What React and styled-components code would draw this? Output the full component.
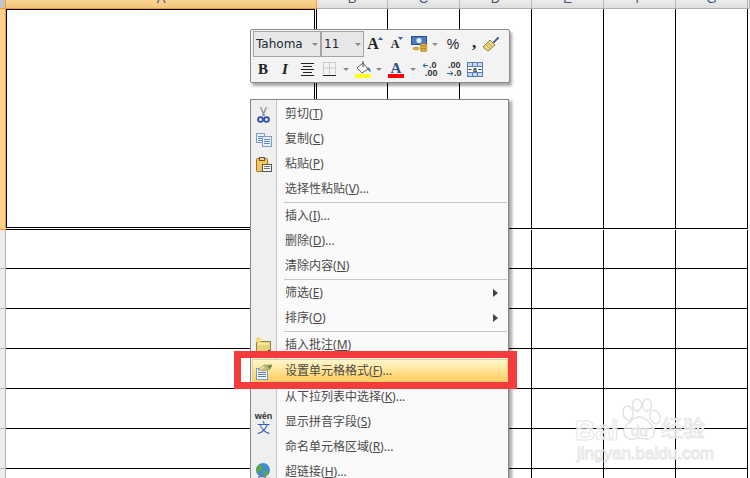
import React from 'react'
import styled, { createGlobalStyle } from 'styled-components'

const GlobalStyle = createGlobalStyle`
  html, body {
    margin: 0;
    padding: 0;
    background: #fff;
    overflow: hidden;
  }
  * { box-sizing: border-box; }
`

const Page = styled.div`
  position: relative;
  width: 750px;
  height: 478px;
  overflow: hidden;
  background: #fff;
  font-family: "Noto Sans", "Noto Sans CJK SC", sans-serif;
`

/* ---------- sheet ---------- */

const HeaderRow = styled.div`
  display: flex;
  height: 9px;
`

const Corner = styled.div`
  width: 6px;
  background: #c4c4c4;
  border-right: 1px solid #f29536;
  border-bottom: 1px solid #f29536;
`

const ColHead = styled.div`
  width: ${p => p.$w}px;
  flex: none;
  display: flex;
  align-items: flex-end;
  justify-content: center;
  overflow: hidden;
  padding-bottom: 3px;
  font-family: "Liberation Sans", sans-serif;
  font-size: 13px;
  line-height: 13px;
  color: #3f5675;
  background: ${p => p.$on ? 'linear-gradient(#f8d593, #f4c578)' : 'linear-gradient(#ececec, #dedede)'};
  border-right: 1px solid ${p => p.$on ? '#f2a33f' : '#b6b6b6'};
  border-bottom: 1px solid ${p => p.$on ? '#f29536' : '#b0b0b0'};
`

const Row = styled.div`
  display: flex;
  height: ${p => p.$h}px;
`

const RowHead = styled.div`
  width: 6px;
  flex: none;
  background: ${p => p.$on ? '#fdd28b' : '#ececec'};
  border-right: 1px solid ${p => p.$on ? '#f29536' : '#b4b4b4'};
  border-bottom: 1px solid ${p => p.$on ? '#f29536' : '#b4b4b4'};
`

const Cell = styled.div`
  width: ${p => p.$w}px;
  flex: none;
  background: #fff;
  border-right: 1px solid ${p => p.$faint ? '#d4dbe8' : '#000'};
  border-bottom: 1px solid ${p => p.$faint ? 'transparent' : '#000'};
  margin-bottom: ${p => p.$short ? '1px' : 0};
`

const SelectedCell = styled(Cell)`
  padding: 0 0 1px 0;
`

const Selection = styled.div`
  height: 100%;
  border: 1px solid #000;
  margin-right: 1px;
`

/* ---------- mini toolbar ---------- */

const MiniBar = styled.div`
  position: absolute;
  left: 250px;
  top: 29px;
  width: 260px;
  height: 54px;
  padding: 1px 0 0 1px;
  background: #f3f3f3;
  border: 1px solid #8b8b8b;
  border-radius: 2px;
  box-shadow: 2px 3px 3px rgba(0, 0, 0, 0.35);
`

const BarRow = styled.div`
  display: flex;
  align-items: center;
  height: ${p => p.$h}px;
`

const Combo = styled.div`
  width: ${p => p.$w}px;
  height: 26px;
  display: flex;
  align-items: center;
  justify-content: space-between;
  padding: 0 5px 0 2px;
  margin-left: ${p => p.$gap || 0}px;
  background: #e7e7e7;
  border: 1px solid #a4a4a4;
  font-family: "DejaVu Sans", sans-serif;
  font-size: 12px;
  color: #222a35;
`

const Caret = styled.span`
  width: ${p => p.$w || 0}px;
  display: flex;
  justify-content: center;
  flex: none;
  &::after {
    content: "";
    border-left: 3px solid transparent;
    border-right: 3px solid transparent;
    border-top: 3px solid #8a8a8a;
  }
`

const Tool = styled.div`
  width: ${p => p.$w}px;
  height: 22px;
  flex: none;
  display: flex;
  align-items: center;
  justify-content: center;
  color: #222;
  font-family: "Liberation Serif", serif;
  font-size: ${p => p.$size || 13}px;
  font-weight: ${p => p.$bold ? 700 : 400};
  font-style: ${p => p.$italic ? 'italic' : 'normal'};
`

const SansGlyph = styled.span`
  font-family: "Liberation Sans", sans-serif;
`

const CommaGlyph = styled.span`
  margin-top: -3px;
`

const Raised = styled.span`
  display: flex;
  align-self: flex-start;
  margin-top: 4px;
  margin-left: -1px;
`

const DecimalText = styled.text`
  font-family: "Liberation Sans", sans-serif;
  font-weight: 700;
  font-size: ${p => p.$size || 9}px;
  fill: #333;
`

/* ---------- context menu ---------- */

const Menu = styled.div`
  position: absolute;
  left: 250px;
  top: 99px;
  width: 259px;
  height: 400px;
  padding-top: 2px;
  border: 1px solid #868686;
  background: linear-gradient(90deg, #efefef 25px, #c6c6c6 25px, #c6c6c6 26px, #fafafa 26px);
  box-shadow: 3px 2px 3px rgba(0, 0, 0, 0.35);
  color: #4a4a4a;
  font-size: 12px;
`

const Item = styled.div`
  position: relative;
  height: 25px;
  margin: ${p => p.$active ? '1px 0 1px 1px' : 0};
  display: flex;
  align-items: center;
  line-height: 23px;
  ${p => p.$active && `
    background: linear-gradient(#fff7cf 0%, #ffe9a6 35%, #ffd673 70%, #ffcf5f 100%);
    outline: 1px solid #e6d28e;
    outline-offset: -1px;
  `}
`

const IconSlot = styled.div`
  width: ${p => p.$active ? 24 : 25}px;
  height: 25px;
  flex: none;
  display: flex;
  align-items: center;
  justify-content: center;
`

const Label = styled.span`
  padding-left: 9px;
  padding-bottom: 2px;
  white-space: nowrap;
`

const SubArrow = styled.span`
  position: absolute;
  right: 10px;
  top: 8px;
  border-top: 4px solid transparent;
  border-bottom: 4px solid transparent;
  border-left: 5px solid #444;
`

const Separator = styled.div`
  height: 2px;
  margin-left: 33px;
  margin-right: 1px;
  border-top: 1px solid #c6c6c6;
`

const WenIcon = styled.div`
  display: flex;
  flex-direction: column;
  align-items: center;
`

const WenTop = styled.span`
  font-family: "Liberation Sans", sans-serif;
  font-size: 9px;
  font-weight: 700;
  line-height: 8px;
  color: #333;
`

const WenBottom = styled.span`
  font-family: "Noto Sans CJK SC", sans-serif;
  font-size: 13px;
  line-height: 13px;
  color: #3a5fb0;
`

/* ---------- overlays ---------- */

const RedBox = styled.div`
  position: absolute;
  left: 234px;
  top: 351px;
  width: 283px;
  height: 38px;
  border: solid #f53b3b;
  border-width: 7px 9px 7px 7px;
`

const Watermark = styled.div`
  position: absolute;
  left: 574px;
  top: 396px;
  width: 140px;
  height: 66px;
`

const Wm = styled.span`
  position: absolute;
  left: ${p => p.$x}px;
  top: ${p => p.$y}px;
  white-space: nowrap;
  font-family: "Liberation Sans", "Noto Sans CJK SC", sans-serif;
  font-size: ${p => p.$size}px;
  line-height: 1;
  font-weight: ${p => p.$bold ? 700 : 400};
  color: rgba(255, 255, 255, 0.8);
  -webkit-text-stroke: 1px #e6e6e6;
`

const PawSlot = styled.div`
  position: absolute;
  left: 46px;
  top: 2px;
  display: flex;
`

/* ---------- icons ---------- */

const Scissors = () => (
  <svg width="13" height="16" viewBox="0 0 13 16">
    <path d="M3.500 0 L7.500 9 M9.500 0 L5.500 9" stroke="#8b95a2" strokeWidth="1.400" fill="none" />
    <circle cx="3.500" cy="12.500" r="2.400" fill="none" stroke="#2b4fa8" strokeWidth="1.800" />
    <circle cx="9.500" cy="12.500" r="2.400" fill="none" stroke="#2b4fa8" strokeWidth="1.800" />
  </svg>
)

const Doc = ({ x, y, w, h }) => (
  <g>
    <rect x={x + 0.5} y={y + 0.5} width={w} height={h} fill="#eef3fb" stroke="#7d9bc9" />
    <path d={`M${x + 2} ${y + 3.5}h${w - 3}M${x + 2} ${y + 5.5}h${w - 3}M${x + 2} ${y + 7.5}h${w - 3}`} stroke="#5f86c0" />
  </g>
)

const CopyIcon = () => (
  <svg width="16" height="14" viewBox="0 0 16 14">
    <Doc x={0} y={0} w={8} h={9} />
    <Doc x={6} y={3} w={9} h={10} />
  </svg>
)

const PasteIcon = () => (
  <svg width="16" height="15" viewBox="0 0 16 15">
    <rect x="0.500" y="1.500" width="11" height="13" rx="1" fill="#f2c658" stroke="#9a7420" />
    <rect x="3.500" y="0.500" width="5" height="3" fill="#d9d4c4" stroke="#6b5a2a" />
    <rect x="6.500" y="7.500" width="9" height="7" fill="#f4f4f4" stroke="#555" />
    <path d="M8 9.500h6M8 11.500h6" stroke="#777" />
  </svg>
)

const CommentIcon = () => (
  <svg width="17" height="17" viewBox="0 0 17 17">
    <path d="M1.500 4.500h14v10l-2 1h-12z" fill="#e8d277" stroke="#97853e" />
    <path d="M3 6h11v2H3z" fill="#f5e9a9" />
    <path d="M13 14.500l2-1" stroke="#4d4420" strokeWidth="2" />
    <path d="M3.500 0v6M.5 3h6M1.500 1l4 4M5.500 1l-4 4" stroke="#f4dc64" strokeWidth="1.200" />
  </svg>
)

const FormatIcon = () => (
  <svg width="18" height="16" viewBox="0 0 18 16">
    <rect x="1.500" y="4.500" width="11" height="11" fill="#f4f7fc" stroke="#7d9bc9" />
    <path d="M3 8.500h8M3 10.500h8M3 12.500h8" stroke="#5f7fb0" />
    <path d="M3 6 L9 1 L17 1 L15 5 L9 7z" fill="#c9bd72" stroke="#7f8450" strokeWidth="0.600" />
    <path d="M12 2 L17 1 L15 5z" fill="#5d8a52" />
    <path d="M5 5.500 L9 2.500" stroke="#f2edd0" strokeWidth="1.200" />
  </svg>
)

const GlobeIcon = () => (
  <svg width="18" height="20" viewBox="0 0 18 20">
    <circle cx="8" cy="7" r="7" fill="#3f8fd0" />
    <path d="M4 2c3 0 4 2 3 4s-3 1-4 3-2-1-2-2 1-4 3-5zM9 8c2-1 4 0 4 2s-2 3-3 3-2-3-1-5z" fill="#5fa83c" />
    <rect x="3.500" y="13.500" width="7" height="3.500" rx="1.700" fill="none" stroke="#6b7e98" strokeWidth="1.300" />
    <rect x="8.500" y="15.500" width="8" height="3.500" rx="1.700" fill="none" stroke="#6b7e98" strokeWidth="1.300" />
  </svg>
)

const Triangle = ({ up }) => (
  <svg width="5" height="3" viewBox="0 0 5 3">
    <path d={up ? 'M0 3 L2.500 0 L5 3z' : 'M0 0 L5 0 L2.500 3z'} fill="#2e5ea8" />
  </svg>
)

const CurrencyIcon = () => (
  <svg width="17" height="16" viewBox="0 0 17 16">
    <rect x="0.500" y="0.500" width="15" height="8" fill="#4f7cc0" stroke="#27508f" />
    <circle cx="8" cy="4.500" r="2.600" fill="#dfe9f7" />
    <ellipse cx="12.500" cy="9" rx="3.500" ry="1.500" fill="#e9b33a" stroke="#96701a" strokeWidth="0.600" />
    <ellipse cx="12.500" cy="11.500" rx="3.500" ry="1.500" fill="#e9b33a" stroke="#96701a" strokeWidth="0.600" />
    <ellipse cx="12.500" cy="14" rx="3.500" ry="1.500" fill="#e9b33a" stroke="#96701a" strokeWidth="0.600" />
    <ellipse cx="5" cy="12.500" rx="3" ry="1.300" fill="#e9b33a" stroke="#96701a" strokeWidth="0.600" />
  </svg>
)

const BrushIcon = () => (
  <svg width="18" height="17" viewBox="0 0 18 17">
    <path d="M11 6 L16 1 L17 2 L12 7z" fill="#3d5f9f" stroke="#2a4274" strokeWidth="0.500" />
    <path d="M1 11 L8 4 L13 9 L6 15z" fill="#efd98a" stroke="#8f7b3a" />
    <path d="M4 9 L9 13M6 7 L11 11" stroke="#b89c45" />
  </svg>
)

const CenterIcon = () => (
  <svg width="15" height="13" viewBox="0 0 15 13">
    <path d="M1 .5h13M3 3.500h9M1 6.500h13M3 9.500h9M1 12.500h13" stroke="#222" />
  </svg>
)

const BorderIcon = () => (
  <svg width="13" height="14" viewBox="0 0 13 14">
    <path d="M.5 .5h12v11M.5 .5v11M.5 6h12M6.500 .5v11" stroke="#a8a8a8" strokeDasharray="1 1" fill="none" />
    <path d="M0 13.500h13" stroke="#222" />
  </svg>
)

const FillIcon = () => (
  <svg width="17" height="17" viewBox="0 0 17 17">
    <path d="M2 7 L8 2 L13 8 L7 12z" fill="#f4f4f4" stroke="#666" />
    <path d="M8 0v6" stroke="#444" />
    <path d="M13 6c2 1 3 3 2.500 5-1.500-1-3-2-3.500-3z" fill="#3a79c8" />
    <rect x="0" y="13" width="16" height="4" fill="#ffff1e" />
  </svg>
)

const FontColorIcon = () => (
  <svg width="16" height="17" viewBox="0 0 16 17">
    <text x="8" y="12" textAnchor="middle" fontFamily="Liberation Serif, serif" fontWeight="700" fontSize="15" fill="#2c4f8f">A</text>
    <rect x="0" y="13" width="16" height="4" fill="#f00" />
  </svg>
)

const IncDecimalIcon = () => (
  <svg width="16" height="16" viewBox="0 0 16 16">
    <DecimalText x="6" y="7">.0</DecimalText>
    <DecimalText x="2" y="15">.00</DecimalText>
    <path d="M0 4.500h5M0 4.500l2.500-2M0 4.500l2.500 2" stroke="#2e5ea8" fill="none" />
  </svg>
)

const DecDecimalIcon = () => (
  <svg width="15" height="16" viewBox="0 0 15 16">
    <DecimalText x="1" y="7">.00</DecimalText>
    <DecimalText x="7" y="15">.0</DecimalText>
    <path d="M0 12.500h6M6 12.500l-2.500-2M6 12.500l-2.500 2" stroke="#2e5ea8" fill="none" />
  </svg>
)

const MergeIcon = () => (
  <svg width="16" height="15" viewBox="0 0 16 15">
    <rect x="0.500" y="0.500" width="15" height="14" fill="#c9d9ef" stroke="#5a7cae" />
    <rect x="1" y="5" width="14" height="5" fill="#fff" />
    <path d="M.5 4.500h15M.5 10.500h15M5.500 .5v4M10.500 .5v4M5.500 10v4M10.500 10v4" stroke="#5a7cae" />
    <DecimalText x="6" y="9.500" $size={7}>a</DecimalText>
    <path d="M1.500 7.500h3M14.500 7.500h-3" stroke="#333" />
  </svg>
)

const Paw = () => (
  <svg width="42" height="46" viewBox="0 0 42 46" fill="rgba(255,255,255,0.7)" stroke="#e2e2e2" strokeWidth="1.400">
    <ellipse cx="8" cy="15" rx="5" ry="7" transform="rotate(-12 8 15)" />
    <ellipse cx="17" cy="7" rx="4.500" ry="6" />
    <ellipse cx="27" cy="7" rx="4.500" ry="6" />
    <ellipse cx="35" cy="19" rx="5" ry="7" transform="rotate(-20 35 19)" />
    <path d="M20 19c6 0 8 5 12 9 5 5 2 13-5 13-3 0-5-1-8-1s-5 2-9 1c-6-1-8-8-4-13 4-4 7-9 14-9z" />
  </svg>
)

/* ---------- data ---------- */

const columns = [
  { name: 'A', w: 311, on: true },
  { name: 'B', w: 71 },
  { name: 'C', w: 72 },
  { name: 'D', w: 72 },
  { name: 'E', w: 72 },
  { name: 'F', w: 72 },
  { name: 'G', w: 72 },
]

const rowHeights = [39, 40, 40, 40, 40, 40, 40]

const menu = [
  { text: '剪切', key: 'T', icon: <Scissors /> },
  { text: '复制', key: 'C', icon: <CopyIcon /> },
  { text: '粘贴', key: 'P', icon: <PasteIcon /> },
  { text: '选择性粘贴', key: 'V', dots: true },
  { sep: true },
  { text: '插入', key: 'I', dots: true },
  { text: '删除', key: 'D', dots: true },
  { text: '清除内容', key: 'N' },
  { sep: true },
  { text: '筛选', key: 'E', sub: true },
  { text: '排序', key: 'O', sub: true },
  { sep: true },
  { text: '插入批注', key: 'M', icon: <CommentIcon /> },
  { text: '设置单元格格式', key: 'F', dots: true, icon: <FormatIcon />, active: true },
  { text: '从下拉列表中选择', key: 'K', dots: true },
  {
    text: '显示拼音字段',
    key: 'S',
    icon: (
      <WenIcon>
        <WenTop>wén</WenTop>
        <WenBottom>文</WenBottom>
      </WenIcon>
    ),
  },
  { text: '命名单元格区域', key: 'R', dots: true },
  { text: '超链接', key: 'H', dots: true, icon: <GlobeIcon /> },
]

export default function App() {
  return (
    <Page>
      <GlobalStyle />

      <HeaderRow>
        <Corner />
        {columns.map(c => (
          <ColHead key={c.name} $w={c.w} $on={c.on}>{c.name}</ColHead>
        ))}
        <ColHead $w={2} />
      </HeaderRow>

      <Row $h={221}>
        <RowHead $on />
        {columns.map(c => c.on ? (
          <SelectedCell key={c.name} $w={c.w}>
            <Selection />
          </SelectedCell>
        ) : (
          <Cell key={c.name} $w={c.w} $short />
        ))}
      </Row>

      {rowHeights.map((h, i) => (
        <Row key={i} $h={h}>
          <RowHead />
          {columns.map(c => <Cell key={c.name} $w={c.w} />)}
        </Row>
      ))}

      <Row $h={20}>
        <RowHead />
        {columns.map(c => <Cell key={c.name} $w={c.w} $faint />)}
      </Row>

      <Watermark>
        <PawSlot><Paw /></PawSlot>
        <Wm $x={1} $y={21} $size={28} $bold>Bai</Wm>
        <Wm $x={57} $y={27} $size={15}>du</Wm>
        <Wm $x={87} $y={22} $size={22}>经验</Wm>
        <Wm $x={3} $y={49} $size={17}>jingyan.baidu.com</Wm>
      </Watermark>

      <MiniBar>
        <BarRow $h={26}>
          <Combo $w={68} $gap={1}>Tahoma<Caret /></Combo>
          <Combo $w={43}>11<Caret /></Combo>
          <Tool $w={22} $size={16} $bold>A<Raised><Triangle up /></Raised></Tool>
          <Tool $w={22} $size={12} $bold>A<Raised><Triangle /></Raised></Tool>
          <Tool $w={22}><CurrencyIcon /></Tool>
          <Caret $w={10} />
          <Tool $w={26} $size={14}><SansGlyph>%</SansGlyph></Tool>
          <Tool $w={16} $size={17} $bold><CommaGlyph>,</CommaGlyph></Tool>
          <Tool $w={18}><BrushIcon /></Tool>
        </BarRow>
        <BarRow $h={24}>
          <Tool $w={22} $size={15} $bold>B</Tool>
          <Tool $w={22} $size={15} $bold $italic>I</Tool>
          <Tool $w={22}><CenterIcon /></Tool>
          <Tool $w={22}><BorderIcon /></Tool>
          <Caret $w={12} />
          <Tool $w={23}><FillIcon /></Tool>
          <Caret $w={8} />
          <Tool $w={26}><FontColorIcon /></Tool>
          <Caret $w={8} />
          <Tool $w={28}><IncDecimalIcon /></Tool>
          <Tool $w={18}><DecDecimalIcon /></Tool>
          <Tool $w={24}><MergeIcon /></Tool>
        </BarRow>
      </MiniBar>

      <Menu>
        {menu.map((m, i) => m.sep ? (
          <Separator key={i} />
        ) : (
          <Item key={i} $active={m.active}>
            <IconSlot $active={m.active}>{m.icon}</IconSlot>
            <Label>
              {m.text}(<u>{m.key}</u>){m.dots ? '...' : ''}
            </Label>
            {m.sub && <SubArrow />}
          </Item>
        ))}
      </Menu>

      <RedBox />
    </Page>
  )
}
